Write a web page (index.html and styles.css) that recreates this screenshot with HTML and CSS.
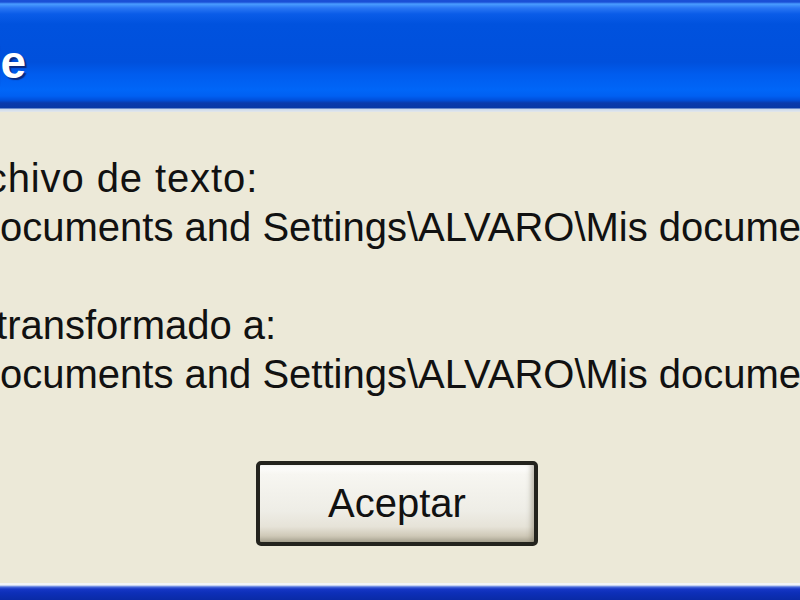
FILE: index.html
```html
<!DOCTYPE html>
<html lang="es">
<head>
    <meta charset="UTF-8">
    <title>Mensaje</title>
    <link rel="stylesheet" href="styles.css">
</head>
<body>
    <div class="window">
        <div class="title-bar">
            <div class="caption">
                <span class="caption-text">Mensaje</span>
            </div>
        </div>

        <div class="content">
            <div class="message">
                <p class="msg-block">
                    <span class="msg-line msg-label">El archivo de texto:</span>
                    <span class="msg-line">C:\Documents and Settings\ALVARO\Mis documentos\texto.txt</span>
                </p>
                <p class="msg-block">
                    <span class="msg-line msg-label-2">Fue transformado a:</span>
                    <span class="msg-line">C:\Documents and Settings\ALVARO\Mis documentos\texto.html</span>
                </p>
            </div>

            <div class="buttons">
                <button type="button" class="btn">Aceptar</button>
            </div>
        </div>

        <div class="bottom-frame"></div>
    </div>
</body>
</html>
```

FILE: styles.css
```css
* {
    margin: 0;
    padding: 0;
    box-sizing: border-box;
}

html, body {
    width: 800px;
    height: 600px;
    overflow: hidden;
}

body {
    background: #ece9d8;
    font-family: 'Liberation Sans', Arial, sans-serif;
    color: #111;
}

.window {
    height: 600px;
    display: flex;
    flex-direction: column;
}

/* barra de titulo estilo XP */
.title-bar {
    height: 112px;
    flex-shrink: 0;
    background: linear-gradient(
        to bottom,
        #1a4fd6 0px,
        #1a4fd6 2px,
        #4a9cff 4px,
        #2a76f4 8px,
        #0a5ce8 14px,
        #0052de 24px,
        #0050dc 62px,
        #005cee 74px,
        #0066f8 90px,
        #0060f2 96px,
        #0050dc 100px,
        #0a3aac 103px,
        #0838a6 108px,
        #c8d8ee 109px,
        #e4e8ea 112px
    );
    display: flex;
    align-items: center;
    padding-top: 12px;
}

.caption {
    width: 26px;
    display: flex;
    justify-content: flex-end;
    white-space: nowrap;
}

.caption-text {
    color: #fff;
    font-weight: 700;
    font-size: 46px;
    text-shadow: 2px 2px 1px #0a2a80;
}

.content {
    flex: 1;
    display: flex;
    flex-direction: column;
    padding-top: 42px;
}

.message {
    margin-left: -80px;
    font-size: 40px;
    line-height: 49px;
    white-space: nowrap;
}

.msg-block {
    margin-bottom: 49px;
}

.msg-block:last-child {
    margin-bottom: 0;
}

.msg-line {
    display: block;
}

.msg-label {
    text-indent: -20px;
    letter-spacing: 0.9px;
}

.msg-label-2 {
    text-indent: -4px;
}

.buttons {
    margin-top: 62px;
    padding-left: 256px;
}

.btn {
    width: 282px;
    height: 85px;
    border: 4px solid #23231d;
    border-radius: 5px;
    background: linear-gradient(
        to bottom,
        #ffffff 0%,
        #f7f6f1 12%,
        #eeede6 60%,
        #e6e3d8 80%,
        #cfc9b8 92%,
        #a9a492 100%
    );
    box-shadow: inset -5px 0 5px -2px rgba(120, 112, 90, 0.45);
    font-family: 'Liberation Sans', Arial, sans-serif;
    font-size: 40px;
    line-height: 45px;
    color: #111;
    cursor: pointer;
}

.bottom-frame {
    height: 17px;
    flex-shrink: 0;
    background: linear-gradient(
        to bottom,
        #f2f4f8 0px,
        #f2f4f8 2px,
        #9ab0ea 3px,
        #4a6ada 4px,
        #1636c6 6px,
        #0d2fb8 10px,
        #0a2aa6 17px
    );
}
```
